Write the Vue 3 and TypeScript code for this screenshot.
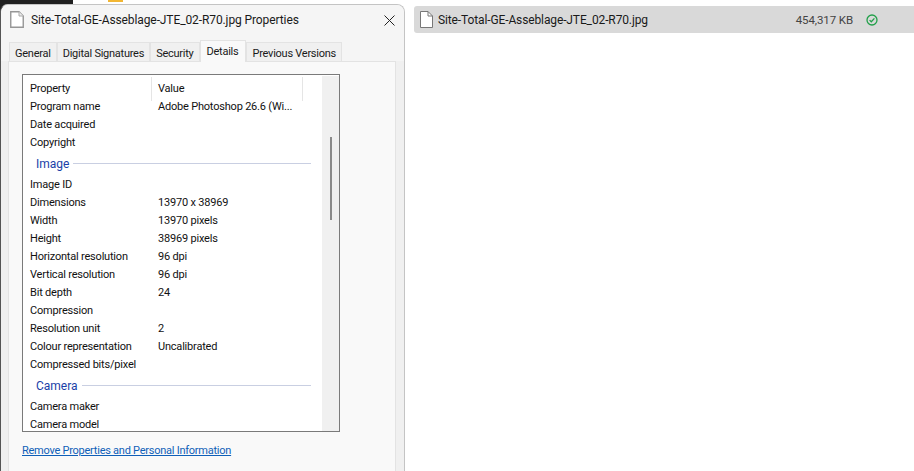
<script setup lang="ts">
interface Row { kind: 'row' | 'section'; name: string; value?: string }
const tabs: string[] = ['General', 'Digital Signatures', 'Security', 'Details', 'Previous Versions']
const rows: Row[] = [
  { kind: 'row', name: 'Program name', value: 'Adobe Photoshop 26.6 (Wi...' },
  { kind: 'row', name: 'Date acquired' },
  { kind: 'row', name: 'Copyright' },
  { kind: 'section', name: 'Image' },
  { kind: 'row', name: 'Image ID' },
  { kind: 'row', name: 'Dimensions', value: '13970 x 38969' },
  { kind: 'row', name: 'Width', value: '13970 pixels' },
  { kind: 'row', name: 'Height', value: '38969 pixels' },
  { kind: 'row', name: 'Horizontal resolution', value: '96 dpi' },
  { kind: 'row', name: 'Vertical resolution', value: '96 dpi' },
  { kind: 'row', name: 'Bit depth', value: '24' },
  { kind: 'row', name: 'Compression' },
  { kind: 'row', name: 'Resolution unit', value: '2' },
  { kind: 'row', name: 'Colour representation', value: 'Uncalibrated' },
  { kind: 'row', name: 'Compressed bits/pixel' },
  { kind: 'section', name: 'Camera' },
  { kind: 'row', name: 'Camera maker' },
  { kind: 'row', name: 'Camera model' },
]
</script>

<template>
  <div class="page">
    <div class="left">
      <div class="backdrop"><div class="dark"></div><div class="light"><span class="orange"></span></div></div>
      <section class="dialog">
        <header class="titlebar">
          <svg class="title-icon" width="14" height="17" viewBox="0 0 14 17">
            <path d="M.75 .75H9L13.25 5V16.25H.75Z" fill="#fff" stroke="#969696" stroke-width="1.4" />
            <path d="M9 .75V5H13.25" fill="#ececec" stroke="#a8a8a8" />
          </svg>
          <span class="title">Site-Total-GE-Asseblage-JTE_02-R70.jpg Properties</span>
          <svg class="close" width="11" height="11" viewBox="0 0 11 11">
            <path d="M.5 .5L10.5 10.5M10.5 .5L.5 10.5" stroke="#222" stroke-width="1" fill="none" />
          </svg>
        </header>
        <nav class="tabs">
          <div v-for="t in tabs" :key="t" class="tab" :class="{ active: t === 'Details' }">{{ t }}</div>
        </nav>
        <div class="panel">
          <div class="listbox">
            <div class="list">
              <div class="head">
                <span class="col-a">Property</span>
                <span class="col-b">Value</span>
              </div>
              <template v-for="r in rows" :key="r.name">
                <div v-if="r.kind === 'row'" class="row">
                  <span class="name">{{ r.name }}</span>
                  <span class="value">{{ r.value }}</span>
                </div>
                <div v-else class="section">
                  <span>{{ r.name }}</span>
                  <i></i>
                </div>
              </template>
            </div>
            <div class="scrollbar"><div class="thumb"></div></div>
          </div>
          <a class="link">Remove Properties and Personal Information</a>
        </div>
      </section>
    </div>
    <main class="right">
      <div class="file">
        <svg class="file-icon" width="13" height="17" viewBox="0 0 13 17">
          <path d="M.5 .5H8L12.5 5V16.5H.5Z" fill="#fff" stroke="#777" />
          <path d="M8 .5V5H12.5" fill="none" stroke="#777" />
        </svg>
        <span class="file-name">Site-Total-GE-Asseblage-JTE_02-R70.jpg</span>
        <span class="file-size">454,317 KB</span>
        <svg class="check" width="12" height="12" viewBox="0 0 12 12">
          <circle cx="6" cy="6" r="5" fill="none" stroke="#22a04a" stroke-width="1.3" />
          <path d="M3.6 6.1L5.3 7.8L8.4 4.4" fill="none" stroke="#22a04a" stroke-width="1.3" />
        </svg>
      </div>
    </main>
  </div>
</template>

<style scoped>
.page {
  width: 914px;
  height: 471px;
  display: flex;
  overflow: hidden;
  background: #fff;
  font-family: Roboto, "Open Sans", sans-serif;
  font-size: 12px;
  color: #111;
}
.left {
  width: 405px;
  flex: none;
  display: flex;
  flex-direction: column;
  position: relative;
}
.backdrop {
  position: absolute;
  left: 0;
  top: 0;
  right: 0;
  height: 20px;
  display: flex;
}
.dark { width: 73px; background: #202020; }
.light { flex: 1; background: #fff; position: relative; }
.orange { position: absolute; left: 35px; top: 0; width: 15px; height: 2px; background: #f2b632; }
.dialog {
  position: relative;
  margin-top: 4px;
  flex: 1;
  background: #f0f0f0;
  border: 1px solid #c4c4c4;
  border-left-color: #555;
  border-bottom: none;
  border-radius: 8px 8px 0 0;
  display: flex;
  flex-direction: column;
  overflow: hidden;
}
.titlebar {
  height: 32px;
  box-sizing: border-box;
  flex: none;
  display: flex;
  align-items: center;
  padding: 0 9px 2px 9px;
  background: #f5f5f5;
}
.title-icon { flex: none; margin: 0 7px 2px 0; }
.title { flex: 1; font-size: 12px; color: #1a1a1a; white-space: nowrap; letter-spacing: -0.1px; }
.close { flex: none; }
.tabs {
  height: 24px;
  flex: none;
  display: flex;
  align-items: flex-end;
  padding-left: 8px;
  background: #f5f5f5;
}
.tab {
  height: 18px;
  line-height: 21px;
  padding: 0 5px;
  border: 1px solid #e3e3e3;
  border-bottom: none;
  color: #1a1a1a;
  font-size: 11px;
  letter-spacing: -0.25px;
  white-space: nowrap;
  background: #f0f0f0;
}
.tab.active {
  height: 21px;
  line-height: 21px;
  padding: 0 7px 0 6px;
  background: #f9f9f9;
  position: relative;
  z-index: 1;
  margin-bottom: -1px;
}
.panel {
  flex: 1;
  margin: 0 8px 0 7px;
  background: #f9f9f9;
  border: 1px solid #e3e3e3;
  border-bottom: none;
  padding: 12px 0 0 13px;
  display: flex;
  flex-direction: column;
}
.listbox {
  width: 318px;
  height: 358px;
  flex: none;
  box-sizing: border-box;
  border: 1px solid #7a7a7a;
  background: #fff;
  display: flex;
  overflow: hidden;
}
.list { flex: 1; min-width: 0; padding: 1px 0 0 7px; }
.head { height: 22px; display: flex; align-items: center; padding-top: 3px; box-sizing: border-box; }
.head .col-a { width: 121px; height: 24px; line-height: 24px; border-right: 1px solid #e5e5e5; flex: none; }
.head .col-b { width: 151px; height: 24px; line-height: 24px; padding-left: 6px; box-sizing: border-box; border-right: 1px solid #e5e5e5; flex: none; }
.head, .row { font-size: 11px; letter-spacing: -0.2px; color: #111; }
.row { height: 18px; line-height: 18px; display: flex; white-space: nowrap; }
.name { width: 128px; flex: none; }
.value { flex: 1; }
.section {
  height: 24px;
  display: flex;
  align-items: center;
  padding: 0 11px 0 6px;
  color: #1a3fa8;
  font-size: 12px;
  gap: 4px;
}
.section i { flex: 1; height: 1px; margin-bottom: 2px; background: #c9cfe2; }
.scrollbar {
  width: 17px;
  flex: none;
  background: #f0f0f0;
  margin-top: 1px;
  padding-top: 61px;
  box-sizing: border-box;
  display: flex;
  justify-content: center;
}
.thumb { width: 2px; height: 83px; background: #8a8a8a; }
.link {
  margin-top: 11px;
  color: #0f5fb8;
  text-decoration: underline;
  font-size: 11px;
  letter-spacing: -0.25px;
  line-height: 16px;
  white-space: nowrap;
}
.right { flex: 1; padding: 6px 0 0 9px; min-width: 0; }
.file {
  height: 27px;
  background: #d9d9d9;
  border-radius: 3px 0 0 3px;
  display: flex;
  align-items: center;
  padding-left: 6px;
}
.file-icon { flex: none; margin-right: 5px; }
.file-name { width: 319px; flex: none; font-size: 12px; color: #1a1a1a; white-space: nowrap; letter-spacing: -0.12px; }
.file-size { width: 96px; flex: none; text-align: right; color: #444; white-space: nowrap; font-size: 11.5px; letter-spacing: -0.1px; }
.check { flex: none; margin-left: 13px; }
</style>
